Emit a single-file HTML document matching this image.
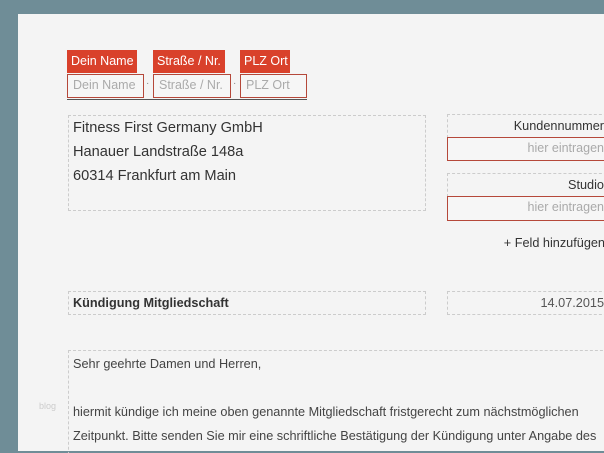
<!DOCTYPE html>
<html style="overflow:hidden;width:604px;height:453px"><head><meta charset="utf-8"><style>
body{margin:0;width:604px;height:453px;overflow:hidden;background:#6f8d97;font-family:"Liberation Sans",sans-serif;position:relative}
.pg{position:absolute;left:18px;top:14px;width:600px;height:437px;background:#f4f4f4}
.a{position:absolute;box-sizing:border-box;white-space:nowrap}
.lab{background:#d9412b;color:#fff;font-size:12.5px;line-height:23px;padding:0 4px}
.in{border:1px solid #b5483a;color:#aaa;font-size:12.5px;line-height:21px;padding:0 5px;background:#f6f6f6}
.d{border:1px dashed #ccc}
.t{color:#333}
</style></head><body>
<div class="pg"></div>
<div class="a lab" style="left:67px;top:50px;width:70px">Dein Name</div>
<div class="a lab" style="left:153px;top:50px;width:72px">Straße / Nr.</div>
<div class="a lab" style="left:240px;top:50px;width:50px">PLZ Ort</div>
<div class="a in" style="left:67px;top:74px;width:77px;height:24px">Dein Name</div>
<div class="a" style="left:146px;top:78px;font-size:10px;color:#888">·</div>
<div class="a in" style="left:153px;top:74px;width:78px;height:24px">Straße / Nr.</div>
<div class="a" style="left:233px;top:78px;font-size:10px;color:#888">·</div>
<div class="a in" style="left:240px;top:74px;width:67px;height:24px">PLZ Ort</div>
<div class="a" style="left:67px;top:99px;width:240px;height:1px;background:#555"></div>
<div class="a d t" style="left:68px;top:115px;width:358px;height:96px;padding:0 4px;font-size:14.6px;line-height:24px">Fitness First Germany GmbH<br>Hanauer Landstraße 148a<br>60314 Frankfurt am Main</div>
<div class="a d t" style="left:447px;top:114px;width:165px;height:24px;text-align:right;padding-right:7px;font-size:12.7px;line-height:22px">Kundennummer</div>
<div class="a in" style="left:447px;top:137px;width:165px;height:24px;text-align:right;padding-right:7px">hier eintragen</div>
<div class="a d t" style="left:447px;top:173px;width:165px;height:24px;text-align:right;padding-right:7px;font-size:12.7px;line-height:22px">Studio</div>
<div class="a in" style="left:447px;top:196px;width:165px;height:25px;text-align:right;padding-right:7px">hier eintragen</div>
<div class="a t" style="left:470px;top:236px;width:142px;text-align:right;padding-right:7px;font-size:12.7px">+ Feld hinzufügen</div>
<div class="a d t" style="left:68px;top:291px;width:358px;height:24px;padding-left:4px;font-size:12.7px;line-height:22px;font-weight:bold;color:#333">Kündigung Mitgliedschaft</div>
<div class="a d t" style="left:447px;top:291px;width:165px;height:24px;text-align:right;padding-right:7px;font-size:12.7px;line-height:22px;color:#555">14.07.2015</div>
<div class="a d t" style="left:68px;top:350px;width:560px;height:110px;padding:1px 4px;font-size:12.7px;line-height:24px;color:#444">Sehr geehrte Damen und Herren,<br><br>hiermit kündige ich meine oben genannte Mitgliedschaft fristgerecht zum nächstmöglichen<br>Zeitpunkt. Bitte senden Sie mir eine schriftliche Bestätigung der Kündigung unter Angabe des</div>
<div class="a" style="left:39px;top:401px;font-size:9px;color:#ccc">blog</div>
</body></html>
